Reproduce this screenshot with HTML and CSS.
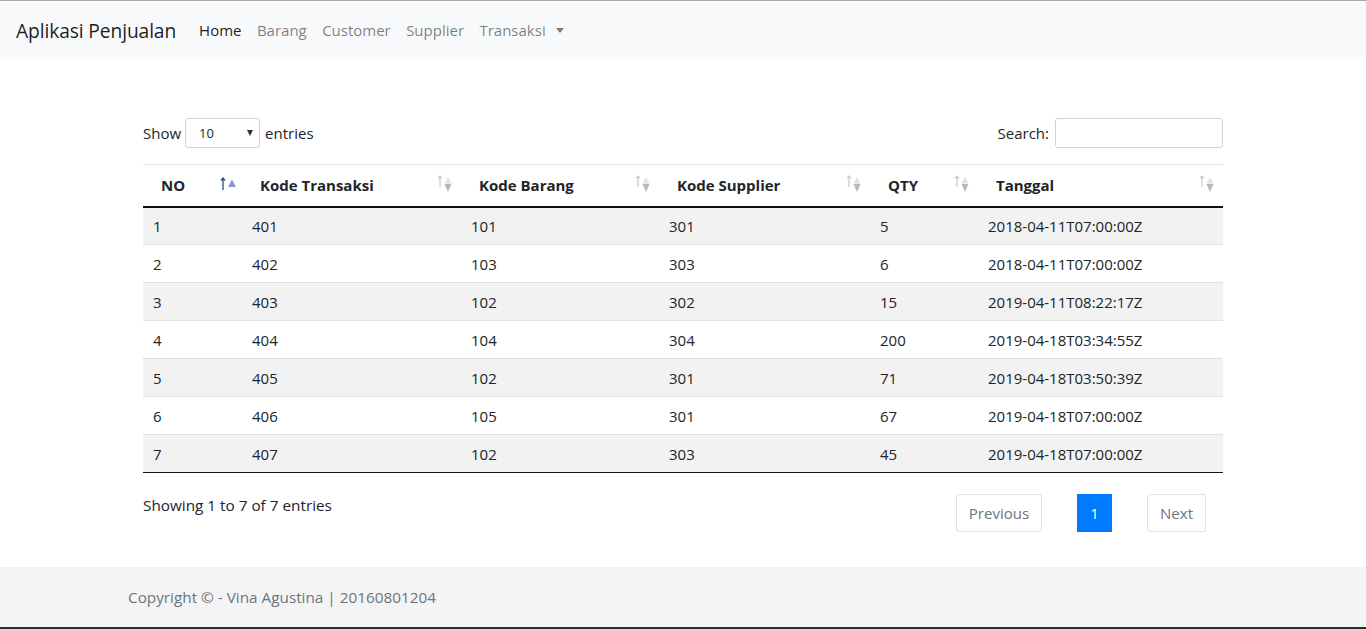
FILE: index.html
```html
<!DOCTYPE html>
<html>
<head>
<meta charset="utf-8">
<link rel="stylesheet" href="styles.css">
</head>
<body>
<div class="topline"></div>
<nav class="navbar">
  <span class="brand">Aplikasi Penjualan</span>
  <ul class="nav">
    <li class="active">Home</li>
    <li>Barang</li>
    <li>Customer</li>
    <li>Supplier</li>
    <li class="dropdown">Transaksi <span class="caret"></span></li>
  </ul>
</nav>
<main class="content">
  <div class="dt-top">
    <label class="length">Show <span class="select"><span>10</span><span class="tri"></span></span> entries</label>
    <label class="search">Search: <span class="input"></span></label>
  </div>
  <table class="dt">
    <colgroup>
      <col style="width:99px"><col style="width:219px"><col style="width:198px"><col style="width:211px"><col style="width:108px"><col style="width:245px">
    </colgroup>
    <thead>
      <tr>
        <th class="sorted">NO<span class="sort"><svg width="18" height="14" viewBox="0 0 18 14"><path d="M3 1 L3 13 M1 3.5 L3 1 L5 3.5" stroke="#2d4a8a" stroke-width="1.3" fill="none"/><path d="M8 10 L12 2.5 L16 10 Z" fill="#8a95e0"/></svg></span></th>
        <th>Kode Transaksi<span class="sort"><svg width="18" height="18" viewBox="0 0 18 18"><path d="M3 1 L3 12 M1 3.5 L3 1 L5 3.5" stroke="#c8c8c8" stroke-width="1.2" fill="none"/><path d="M7.5 8.5 L11 2 L14.5 8.5 Z" fill="#e2e2e2"/><path d="M7.5 9 L11 17 L14.5 9 Z" fill="#b8b8b8"/></svg></span></th>
        <th>Kode Barang<span class="sort"><svg width="18" height="18" viewBox="0 0 18 18"><path d="M3 1 L3 12 M1 3.5 L3 1 L5 3.5" stroke="#c8c8c8" stroke-width="1.2" fill="none"/><path d="M7.5 8.5 L11 2 L14.5 8.5 Z" fill="#e2e2e2"/><path d="M7.5 9 L11 17 L14.5 9 Z" fill="#b8b8b8"/></svg></span></th>
        <th>Kode Supplier<span class="sort"><svg width="18" height="18" viewBox="0 0 18 18"><path d="M3 1 L3 12 M1 3.5 L3 1 L5 3.5" stroke="#c8c8c8" stroke-width="1.2" fill="none"/><path d="M7.5 8.5 L11 2 L14.5 8.5 Z" fill="#e2e2e2"/><path d="M7.5 9 L11 17 L14.5 9 Z" fill="#b8b8b8"/></svg></span></th>
        <th>QTY<span class="sort"><svg width="18" height="18" viewBox="0 0 18 18"><path d="M3 1 L3 12 M1 3.5 L3 1 L5 3.5" stroke="#c8c8c8" stroke-width="1.2" fill="none"/><path d="M7.5 8.5 L11 2 L14.5 8.5 Z" fill="#e2e2e2"/><path d="M7.5 9 L11 17 L14.5 9 Z" fill="#b8b8b8"/></svg></span></th>
        <th>Tanggal<span class="sort"><svg width="18" height="18" viewBox="0 0 18 18"><path d="M3 1 L3 12 M1 3.5 L3 1 L5 3.5" stroke="#c8c8c8" stroke-width="1.2" fill="none"/><path d="M7.5 8.5 L11 2 L14.5 8.5 Z" fill="#e2e2e2"/><path d="M7.5 9 L11 17 L14.5 9 Z" fill="#b8b8b8"/></svg></span></th>
      </tr>
    </thead>
    <tbody>
      <tr><td>1</td><td>401</td><td>101</td><td>301</td><td>5</td><td>2018-04-11T07:00:00Z</td></tr>
      <tr><td>2</td><td>402</td><td>103</td><td>303</td><td>6</td><td>2018-04-11T07:00:00Z</td></tr>
      <tr><td>3</td><td>403</td><td>102</td><td>302</td><td>15</td><td>2019-04-11T08:22:17Z</td></tr>
      <tr><td>4</td><td>404</td><td>104</td><td>304</td><td>200</td><td>2019-04-18T03:34:55Z</td></tr>
      <tr><td>5</td><td>405</td><td>102</td><td>301</td><td>71</td><td>2019-04-18T03:50:39Z</td></tr>
      <tr><td>6</td><td>406</td><td>105</td><td>301</td><td>67</td><td>2019-04-18T07:00:00Z</td></tr>
      <tr><td>7</td><td>407</td><td>102</td><td>303</td><td>45</td><td>2019-04-18T07:00:00Z</td></tr>
    </tbody>
  </table>
  <div class="dt-bottom">
    <div class="info">Showing 1 to 7 of 7 entries</div>
    <ul class="pagination">
      <li class="page">Previous</li>
      <li class="page current">1</li>
      <li class="page">Next</li>
    </ul>
  </div>
</main>
<footer class="footer">
  <span>Copyright © - Vina Agustina | 20160801204</span>
</footer>
<div class="taskbar"></div>
</body>
</html>
```
FILE: styles.css
```css
* { box-sizing: border-box; }
html, body { margin: 0; padding: 0; }
body {
  font-family: "Open Sans", "Noto Sans", sans-serif;
  font-size: 15px;
  color: #212529;
  background: #fff;
  height: 629px;
  overflow: hidden;
}
.topline { height: 1px; background: #a9a9a9; }
.navbar {
  height: 56px;
  background: #f8f9fa;
  display: flex;
  align-items: center;
  padding: 2px 16px 0;
}
.brand { font-size: 19.2px; color: rgba(0,0,0,.9); margin-right: 23px; letter-spacing: -0.1px; }
.nav { list-style: none; margin: 0; padding: 0; display: flex; gap: 15.4px; }
.nav li { color: rgba(0,0,0,.5); font-size: 15px; }
.nav li.active { color: rgba(0,0,0,.9); }
.caret {
  display: inline-block; width: 0; height: 0; margin-left: 6px; vertical-align: 3px;
  border-top: 5px solid rgba(0,0,0,.5); border-left: 4.5px solid transparent; border-right: 4.5px solid transparent;
}
.content { width: 1080px; margin: 61px 0 0 143px; }
.dt-top { display: flex; justify-content: space-between; align-items: center; height: 30px; }
.length, .search { display: flex; align-items: center; }
.select {
  display: inline-flex; align-items: center; justify-content: space-between;
  width: 75px; height: 30px; margin: 0 5px 0 4px; padding: 0 6px 0 13px;
  border: 1px solid #ced4da; border-radius: 3px; font-size: 13px;
}
.tri { width: 0; height: 0; border-top: 6px solid #333; border-left: 3.5px solid transparent; border-right: 3.5px solid transparent; }
.input { display: inline-block; width: 168px; height: 30px; margin-left: 6px; border: 1px solid #ced4da; border-radius: 3px; }
.dt { width: 1080px; border-collapse: collapse; table-layout: fixed; margin-top: 16px; }
.dt th {
  position: relative; text-align: left; font-weight: 700; height: 42px; padding: 0 18px;
  border-top: 1px solid #dee2e6; border-bottom: 2px solid #111;
}
.dt th .sort { position: absolute; right: 6px; top: 10px; }
.dt th.sorted .sort { right: 4px; top: 10px; }
.dt td { height: 38px; padding: 1px 10px 0; border-top: 1px solid #dee2e6; }
.dt tbody tr:nth-child(odd) { background: #f2f2f2; }
.dt tbody tr:last-child td { border-bottom: 1px solid #111; }
.dt tbody tr:first-child td { border-top: 0; }
.dt-bottom { display: flex; justify-content: space-between; align-items: flex-start; margin-top: 21px; padding-right: 17px; }
.info { padding-top: 1px; font-size: 15.3px; }
.pagination { list-style: none; margin: 0; padding: 0; display: flex; gap: 35px; }
.page {
  height: 38px; padding: 0 12px; display: flex; align-items: center;
  border: 1px solid #dee2e6; border-radius: 3px; color: #6c757d;
}
.page.current { background: #007bff; border-color: #007bff; color: #fff; border-radius: 0; width: 35px; justify-content: center; }
.footer {
  margin-top: 35px; height: 60px; background: #f4f4f4; font-size: 15.3px;
  display: flex; align-items: center; padding-left: 128px; color: #6c757d;
}
.taskbar { height: 2px; background: #2b2b2b; }
```
